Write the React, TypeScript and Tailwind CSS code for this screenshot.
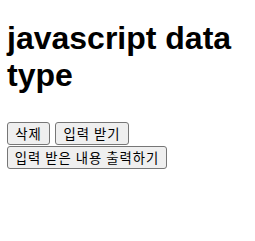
import React from "react";

const btn =
  "flex items-center justify-center h-[23px] px-[6px] bg-[#efefef] border border-[#767676] rounded-[3px] text-[13.33px] tracking-[1px] text-black leading-none font-['Noto_Sans_CJK_KR',sans-serif]";

export default function App() {
  return (
    <div className="px-[7px] bg-white min-h-screen">
      <h1 className="pt-[20px] mb-[28px] text-[32px] font-bold leading-[37px] text-black font-['Liberation_Sans',sans-serif]">
        javascript data type
      </h1>
      <div className="flex flex-col items-start gap-[1px]">
        <div className="flex gap-[5px]">
          <button className={`${btn} w-[43px]`}>삭제</button>
          <button className={`${btn} w-[74px]`}>입력 받기</button>
        </div>
        <button className={`${btn} w-[160px]`}>입력 받은 내용 출력하기</button>
      </div>
    </div>
  );
}
